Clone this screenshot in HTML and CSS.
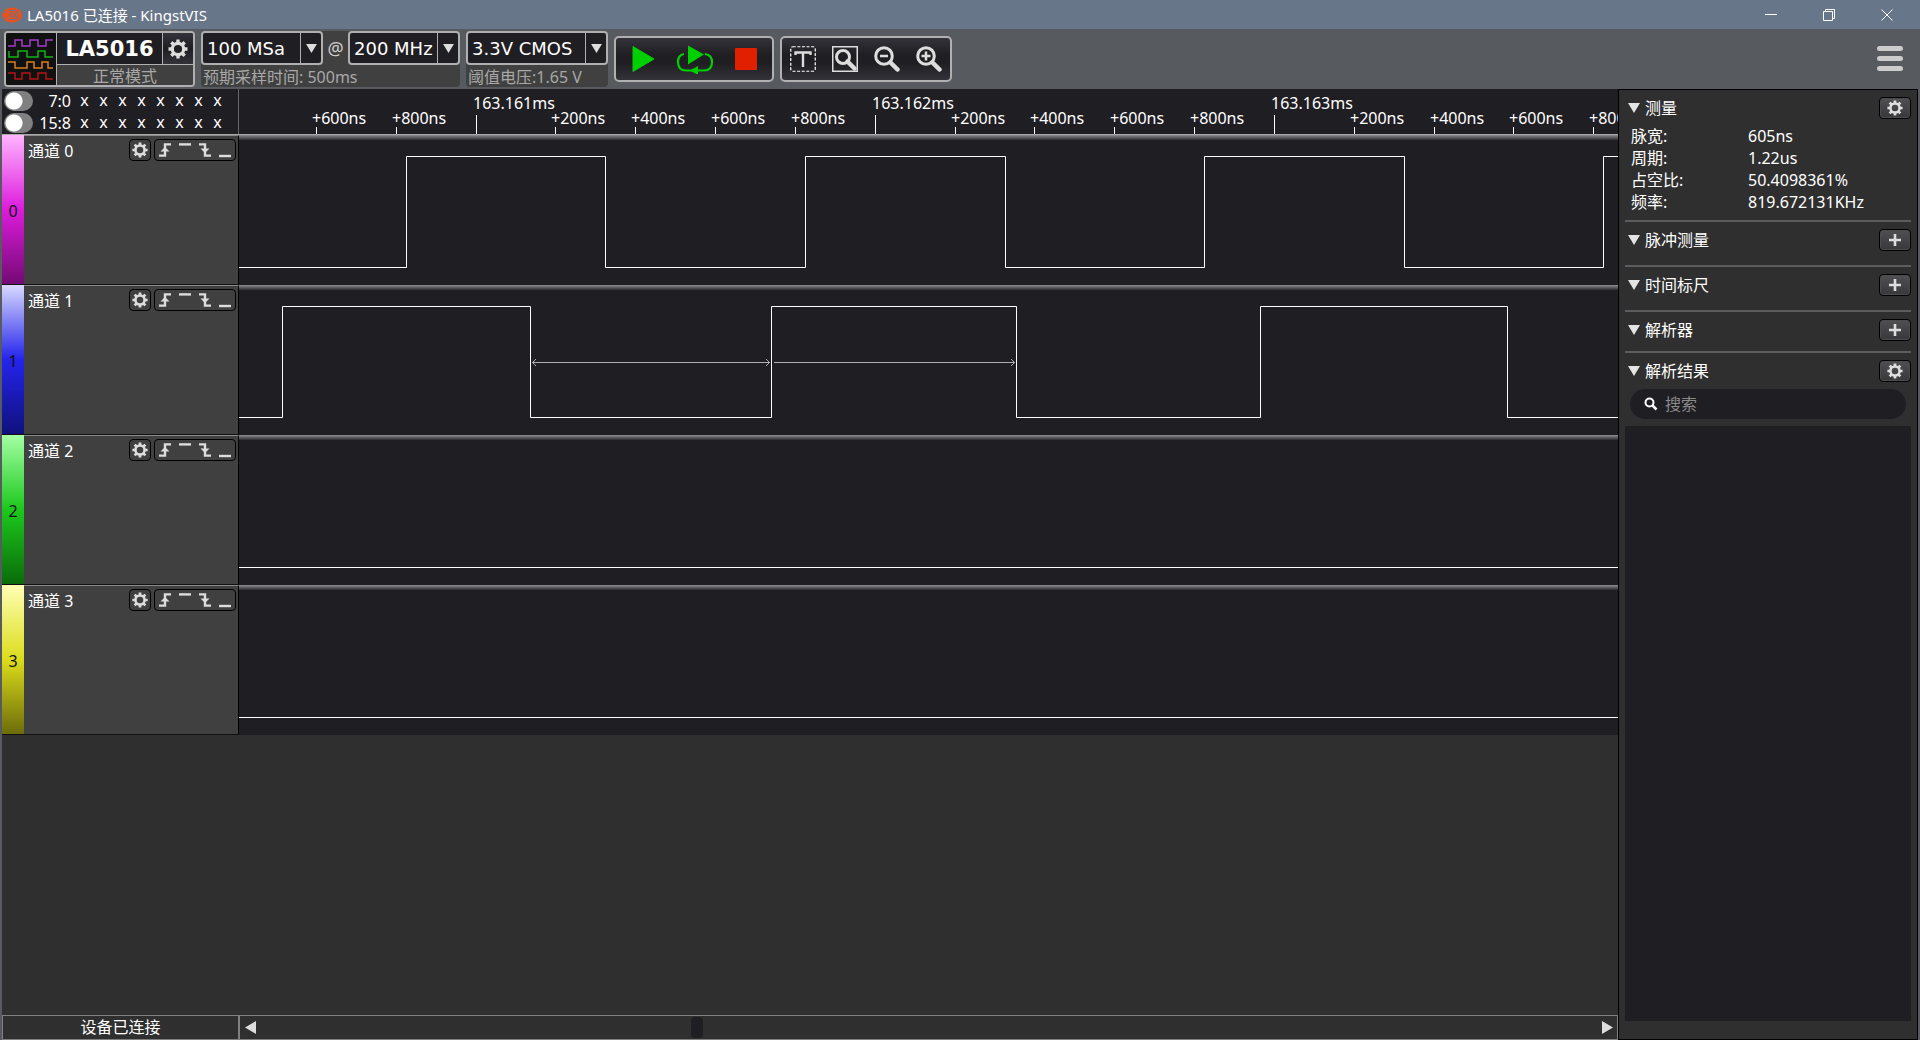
FILE: index.html
```html
<!DOCTYPE html>
<html lang="zh-CN">
<head>
    <meta charset="UTF-8">
    <meta name="viewport" content="width=device-width, initial-scale=1.0">
    <title>LA5016 已连接 - KingstVIS</title>
    <link rel="stylesheet" href="styles.css">
</head>
<body>
    <!-- shared icons -->
    <svg class="sprite" aria-hidden="true">
        <symbol id="gear" viewBox="0 0 20 20">
            <circle cx="10" cy="10" r="5.700" fill="none" stroke="currentColor" stroke-width="3.200"/>
            <path d="M10 .5V5M10 15v4.500M.5 10H5M15 10h4.500M3.300 3.300l3 3M13.700 13.700l3 3M16.700 3.300l-3 3M6.300 13.700l-3 3" stroke="currentColor" stroke-width="3.400"/>
        </symbol>
        <symbol id="plus" viewBox="0 0 20 20">
            <path d="M10 4v12M4 10h12" stroke="currentColor" stroke-width="2.600"/>
        </symbol>
        <symbol id="down" viewBox="0 0 12 10">
            <path d="M0 0h12L6 10z" fill="currentColor"/>
        </symbol>
        <symbol id="rise" viewBox="0 0 20 20">
            <path d="M4 15.600h6V4.400h6" fill="none" stroke="currentColor" stroke-width="2.400"/>
            <path d="M5.500 11.500 10 7l4.500 4.500z" fill="currentColor"/>
        </symbol>
        <symbol id="high" viewBox="0 0 20 20">
            <path d="M4 4.400h12" stroke="currentColor" stroke-width="2.400"/>
        </symbol>
        <symbol id="fall" viewBox="0 0 20 20">
            <path d="M4 4.400h6v11.200h6" fill="none" stroke="currentColor" stroke-width="2.400"/>
            <path d="M5.500 8.500h9L10 13z" fill="currentColor"/>
        </symbol>
        <symbol id="low" viewBox="0 0 20 20">
            <path d="M4 16h12" stroke="currentColor" stroke-width="2.400"/>
        </symbol>
    </svg>

    <header class="titlebar">
        <svg class="app-icon" width="20" height="16" viewBox="0 0 20 16">
            <ellipse cx="10" cy="8" rx="10" ry="7.500" fill="#e8501c"/>
            <path d="M1 5h4M1 11h4M7 3.500h5q4 0 4 4.500t-4 4.500H7M8.500 6v4M8.500 6h2.500q2 0 2 2t-2 2H8.500" fill="none" stroke="#687689" stroke-width="1.200"/>
        </svg>
        <h1 class="title">LA5016 已连接 - KingstVIS</h1>
        <div class="window-buttons">
            <button class="window-button" aria-label="最小化"><svg width="12" height="12"><path d="M0 5.500h12" stroke="#fff"/></svg></button>
            <button class="window-button" aria-label="还原"><svg width="12" height="12"><path d="M.5 2.500h9v9h-9zM2.500 2.500v-2h9v9h-2" fill="none" stroke="#fff"/></svg></button>
            <button class="window-button" aria-label="关闭"><svg width="12" height="12"><path d="M.5.5l11 11M11.500.5l-11 11" stroke="#fff"/></svg></button>
        </div>
    </header>

    <div class="toolbar">
        <div class="device">
            <svg class="device-logo" width="50" height="52" viewBox="0 0 50 52" fill="none" stroke-width="1.500">
                <path d="M2 13h7V7h7v6h8V7h8v6h8V7h7" stroke="#a03ccc"/>
                <path d="M3 18v6h9v-6h9v6h11v-6h7v6h8" stroke="#0cb414"/>
                <path d="M2 29h7v6h12v-6h7v6h8v-6h6v6h5" stroke="#d8801c"/>
                <path d="M2 40h7v6h7v-6h8v6h8v-6h8v6h7" stroke="#b41414"/>
            </svg>
            <div class="device-info">
                <div class="device-top">
                    <span class="device-name">LA5016</span>
                    <button class="device-settings" aria-label="设备设置"><svg width="20" height="20"><use href="#gear"/></svg></button>
                </div>
                <div class="device-mode">正常模式</div>
            </div>
        </div>

        <div class="option-group">
            <div class="option-row">
                <div class="combo combo-depth">
                    <select aria-label="采样深度"><option>100 MSa</option></select>
                    <span class="combo-arrow"><svg width="11" height="9"><use href="#down"/></svg></span>
                </div>
                <span class="at">@</span>
                <div class="combo combo-rate">
                    <select aria-label="采样率"><option>200 MHz</option></select>
                    <span class="combo-arrow"><svg width="11" height="9"><use href="#down"/></svg></span>
                </div>
            </div>
            <div class="option-note">预期采样时间: 500ms</div>
        </div>

        <div class="option-group">
            <div class="option-row">
                <div class="combo combo-level">
                    <select aria-label="阈值电压"><option>3.3V CMOS</option></select>
                    <span class="combo-arrow"><svg width="11" height="9"><use href="#down"/></svg></span>
                </div>
            </div>
            <div class="option-note">阈值电压:1.65 V</div>
        </div>

        <div class="button-group run-group">
            <button class="tool" aria-label="开始"><svg width="38" height="30"><path d="M9 2.500 30 15 9 27.500z" fill="#00d000" stroke="#00d000" stroke-linejoin="round"/></svg></button>
            <button class="tool" aria-label="循环采样">
                <svg width="38" height="30" viewBox="0 0 38 30">
                    <path d="M12 1.500 28 10.500 12 20.500z" fill="#00d000"/>
                    <path d="M8 10q-6 1-6 8 0 8.500 8 8.500h18q8 0 8-8.500 0-7-7-8" fill="none" stroke="#00d000" stroke-width="2.200"/>
                    <path d="M14 26.500 22 22v9z" fill="#00d000"/>
                </svg>
            </button>
            <button class="tool" aria-label="停止"><svg width="38" height="30"><rect x="8" y="4" width="22" height="22" rx="1" fill="#e02000"/></svg></button>
        </div>

        <div class="button-group zoom-group">
            <button class="tool" aria-label="触发位置">
                <svg width="26" height="26" viewBox="0 0 26 26" fill="none" stroke="#ddd">
                    <rect x=".75" y=".75" width="24.500" height="24.500" rx="2" stroke="#fff" stroke-width="1.200" stroke-dasharray="3 1.600"/>
                    <path d="M5.500 9V6.500h15V9M13 6.500V21" stroke-width="2.400"/>
                </svg>
            </button>
            <button class="tool" aria-label="缩放至全屏">
                <svg width="26" height="26" viewBox="0 0 26 26" fill="none" stroke="#ddd">
                    <rect x=".75" y=".75" width="24.500" height="24.500" stroke-width="1.500"/>
                    <circle cx="11" cy="11" r="6.500" stroke-width="3"/>
                    <path d="M15.500 15.500 22.500 22.500" stroke-width="4.500" stroke-linecap="round"/>
                </svg>
            </button>
            <button class="tool" aria-label="缩小">
                <svg width="26" height="26" viewBox="0 0 26 26" fill="none" stroke="#ddd">
                    <circle cx="10" cy="10" r="8.300" stroke-width="3"/>
                    <path d="M6 10h8" stroke-width="2.500"/>
                    <path d="M16.500 16.500 23.500 23.500" stroke-width="4.500" stroke-linecap="round"/>
                </svg>
            </button>
            <button class="tool" aria-label="放大">
                <svg width="26" height="26" viewBox="0 0 26 26" fill="none" stroke="#ddd">
                    <circle cx="10" cy="10" r="8.300" stroke-width="3"/>
                    <path d="M5.500 10h9M10 5.500v9" stroke-width="2.500"/>
                    <path d="M16.500 16.500 23.500 23.500" stroke-width="4.500" stroke-linecap="round"/>
                </svg>
            </button>
        </div>

        <button class="menu" aria-label="菜单">
            <svg width="26" height="26" fill="#ccc"><rect width="26" height="5" y="0" rx="2.500"/><rect width="26" height="5" y="10" rx="2.500"/><rect width="26" height="5" y="20" rx="2.500"/></svg>
        </button>
    </div>

    <div class="workspace">
        <main class="scope">
            <div class="ruler-row">
                <div class="states">
                    <label class="state">
                        <input type="checkbox" class="switch">
                        <span class="state-range">7:0</span>
                        <span class="state-bits"><i>x</i><i>x</i><i>x</i><i>x</i><i>x</i><i>x</i><i>x</i><i>x</i></span>
                    </label>
                    <label class="state">
                        <input type="checkbox" class="switch">
                        <span class="state-range">15:8</span>
                        <span class="state-bits"><i>x</i><i>x</i><i>x</i><i>x</i><i>x</i><i>x</i><i>x</i><i>x</i></span>
                    </label>
                </div>
                <svg class="ruler">
                    <path class="tick" d="M77.500 38v7M157.500 38v7M237.500 26v19M316.500 38v7M396.500 38v7M476.500 38v7M556.500 38v7M636.500 26v19M716.500 38v7M795.500 38v7M875.500 38v7M955.500 38v7M1035.500 26v19M1115.500 38v7M1195.500 38v7M1274.500 38v7M1354.500 38v7"/>
                    <text x="73" y="35">+600ns</text>
                    <text x="153" y="35">+800ns</text>
                    <text x="234" y="20">163.161ms</text>
                    <text x="312" y="35">+200ns</text>
                    <text x="392" y="35">+400ns</text>
                    <text x="472" y="35">+600ns</text>
                    <text x="552" y="35">+800ns</text>
                    <text x="633" y="20">163.162ms</text>
                    <text x="712" y="35">+200ns</text>
                    <text x="791" y="35">+400ns</text>
                    <text x="871" y="35">+600ns</text>
                    <text x="951" y="35">+800ns</text>
                    <text x="1032" y="20">163.163ms</text>
                    <text x="1111" y="35">+200ns</text>
                    <text x="1191" y="35">+400ns</text>
                    <text x="1270" y="35">+600ns</text>
                    <text x="1350" y="35">+800ns</text>
                </svg>
            </div>

            <div class="channel">
                <div class="strip strip-0">0</div>
                <div class="channel-head">
                    <span class="channel-name">通道 0</span>
                    <button class="channel-settings" aria-label="通道 0 设置"><svg width="16" height="16"><use href="#gear"/></svg></button>
                    <div class="triggers">
                        <button aria-label="上升沿"><svg width="20" height="20"><use href="#rise"/></svg></button>
                        <button aria-label="高电平"><svg width="20" height="20"><use href="#high"/></svg></button>
                        <button aria-label="下降沿"><svg width="20" height="20"><use href="#fall"/></svg></button>
                        <button aria-label="低电平"><svg width="20" height="20"><use href="#low"/></svg></button>
                    </div>
                </div>
                <svg class="wave">
                    <path d="M0 132.500H167.500V21.500H366.500V132.500H566.500V21.500H766.500V132.500H965.500V21.500H1165.500V132.500H1364.500V21.500H4000"/>
                </svg>
            </div>

            <div class="channel">
                <div class="strip strip-1">1</div>
                <div class="channel-head">
                    <span class="channel-name">通道 1</span>
                    <button class="channel-settings" aria-label="通道 1 设置"><svg width="16" height="16"><use href="#gear"/></svg></button>
                    <div class="triggers">
                        <button aria-label="上升沿"><svg width="20" height="20"><use href="#rise"/></svg></button>
                        <button aria-label="高电平"><svg width="20" height="20"><use href="#high"/></svg></button>
                        <button aria-label="下降沿"><svg width="20" height="20"><use href="#fall"/></svg></button>
                        <button aria-label="低电平"><svg width="20" height="20"><use href="#low"/></svg></button>
                    </div>
                </div>
                <svg class="wave">
                    <path d="M0 132.500H43.500V21.500H291.500V132.500H532.500V21.500H777.500V132.500H1021.500V21.500H1268.500V132.500H4000"/>
                    <!-- pulse width / period markers -->
                    <path class="measure" d="M293 77.500H531M297 74l-3.500 3.500 3.500 3.500M527 74l3.500 3.500-3.500 3.500M535 77.500H776M772 74l3.500 3.500-3.500 3.500"/>
                </svg>
            </div>

            <div class="channel">
                <div class="strip strip-2">2</div>
                <div class="channel-head">
                    <span class="channel-name">通道 2</span>
                    <button class="channel-settings" aria-label="通道 2 设置"><svg width="16" height="16"><use href="#gear"/></svg></button>
                    <div class="triggers">
                        <button aria-label="上升沿"><svg width="20" height="20"><use href="#rise"/></svg></button>
                        <button aria-label="高电平"><svg width="20" height="20"><use href="#high"/></svg></button>
                        <button aria-label="下降沿"><svg width="20" height="20"><use href="#fall"/></svg></button>
                        <button aria-label="低电平"><svg width="20" height="20"><use href="#low"/></svg></button>
                    </div>
                </div>
                <svg class="wave"><path d="M0 132.500H4000"/></svg>
            </div>

            <div class="channel">
                <div class="strip strip-3">3</div>
                <div class="channel-head">
                    <span class="channel-name">通道 3</span>
                    <button class="channel-settings" aria-label="通道 3 设置"><svg width="16" height="16"><use href="#gear"/></svg></button>
                    <div class="triggers">
                        <button aria-label="上升沿"><svg width="20" height="20"><use href="#rise"/></svg></button>
                        <button aria-label="高电平"><svg width="20" height="20"><use href="#high"/></svg></button>
                        <button aria-label="下降沿"><svg width="20" height="20"><use href="#fall"/></svg></button>
                        <button aria-label="低电平"><svg width="20" height="20"><use href="#low"/></svg></button>
                    </div>
                </div>
                <svg class="wave"><path d="M0 132.500H4000"/></svg>
            </div>

            <footer class="statusbar">
                <div class="status">设备已连接</div>
                <div class="scrollbar">
                    <button aria-label="向左滚动"><svg width="11" height="13"><path d="M11 0v13L0 6.500z" fill="#ddd"/></svg></button>
                    <input type="range" min="0" max="1000" value="325" aria-label="时间位置">
                    <button aria-label="向右滚动"><svg width="11" height="13"><path d="M0 0v13L11 6.500z" fill="#ddd"/></svg></button>
                </div>
            </footer>
        </main>

        <aside class="panel">
            <section class="section">
                <div class="section-head">
                    <button class="section-title"><svg width="12" height="10"><use href="#down"/></svg>测量</button>
                    <button class="section-action" aria-label="测量设置"><svg width="16" height="16"><use href="#gear"/></svg></button>
                </div>
                <dl class="measures">
                    <dt>脉宽:</dt><dd>605ns</dd>
                    <dt>周期:</dt><dd>1.22us</dd>
                    <dt>占空比:</dt><dd>50.4098361%</dd>
                    <dt>频率:</dt><dd>819.672131KHz</dd>
                </dl>
            </section>
            <section class="section section-empty">
                <div class="section-head">
                    <button class="section-title"><svg width="12" height="10"><use href="#down"/></svg>脉冲测量</button>
                    <button class="section-action" aria-label="添加脉冲测量"><svg width="20" height="20"><use href="#plus"/></svg></button>
                </div>
            </section>
            <section class="section section-empty">
                <div class="section-head">
                    <button class="section-title"><svg width="12" height="10"><use href="#down"/></svg>时间标尺</button>
                    <button class="section-action" aria-label="添加时间标尺"><svg width="20" height="20"><use href="#plus"/></svg></button>
                </div>
            </section>
            <section class="section section-decoder">
                <div class="section-head">
                    <button class="section-title"><svg width="12" height="10"><use href="#down"/></svg>解析器</button>
                    <button class="section-action" aria-label="添加解析器"><svg width="20" height="20"><use href="#plus"/></svg></button>
                </div>
            </section>
            <section class="section section-results">
                <div class="section-head">
                    <button class="section-title"><svg width="12" height="10"><use href="#down"/></svg>解析结果</button>
                    <button class="section-action" aria-label="解析结果设置"><svg width="16" height="16"><use href="#gear"/></svg></button>
                </div>
                <label class="search">
                    <svg width="14" height="14" fill="none" stroke="#fff"><circle cx="5.500" cy="5.500" r="4" stroke-width="2"/><path d="M8.500 8.500l4 4" stroke-width="2.500"/></svg>
                    <input type="text" placeholder="搜索" aria-label="搜索">
                </label>
                <div class="results"></div>
            </section>
        </aside>
    </div>
</body>
</html>
```

FILE: styles.css
```css
* {
    box-sizing: border-box;
}

body {
    margin: 0;
    height: 100vh;
    display: flex;
    flex-direction: column;
    background: #575a5e;
    color: #fff;
    font-family: "Noto Sans", "Noto Sans CJK SC", sans-serif;
    font-size: 16px;
    line-height: 22px;
    overflow: hidden;
}

button {
    display: flex;
    align-items: center;
    justify-content: center;
    margin: 0;
    padding: 0;
    border: none;
    background: none;
    color: #ddd;
    font: inherit;
}

svg {
    display: block;
    flex: none;
}

.sprite {
    position: absolute;
    width: 0;
    height: 0;
}

/* title bar */
.titlebar {
    display: flex;
    align-items: center;
    height: 29px;
    flex: none;
    padding-left: 2px;
    background: #687689;
}

.title {
    margin: 0 0 0 5px;
    font-size: 15px;
    font-weight: 400;
}

.window-buttons {
    display: flex;
    margin-left: auto;
    padding-right: 4px;
}

.window-button {
    width: 58px;
    height: 28px;
}

/* toolbar */
.toolbar {
    display: flex;
    align-items: center;
    gap: 6px;
    height: 60px;
    flex: none;
    padding: 0 17px 0 4px;
    background: #575a5e;
}

.device {
    display: flex;
    width: 191px;
    height: 56px;
    border: 2px solid #b0b0b0;
    border-radius: 4px;
    background: #1f1e22;
    overflow: hidden;
}

.device-logo {
    background: #111;
}

.device-info {
    flex: 1;
    display: flex;
    flex-direction: column;
    border-left: 1px solid #b0b0b0;
}

.device-top {
    display: flex;
    height: 32px;
    border-bottom: 1px solid #b0b0b0;
}

.device-name {
    flex: 1;
    text-align: center;
    font-family: "DejaVu Sans", sans-serif;
    font-size: 21px;
    font-weight: 700;
    line-height: 32px;
}

.device-settings {
    width: 31px;
    border-left: 1px solid #b0b0b0;
    background: linear-gradient(#34333a, #1f1e22 50%, #34333a);
}

.device-mode {
    flex: 1;
    line-height: 22px;
    text-align: center;
    color: #a8a8a8;
    background: #404040;
}

.option-group {
    height: 56px;
    border-radius: 4px;
    background: #404040;
}

.option-row {
    display: flex;
    align-items: center;
}

.combo {
    position: relative;
    height: 34px;
    border: 2px solid #b0b0b0;
    border-radius: 4px;
    background: #1f1e22;
}

.combo-depth {
    width: 122px;
}

.combo-rate {
    width: 112px;
}

.combo-level {
    width: 142px;
}

.combo select {
    appearance: none;
    width: 100%;
    height: 30px;
    padding: 1px 0 0 4px;
    border: none;
    background: none;
    color: #fff;
    font-family: "DejaVu Sans", sans-serif;
    font-size: 18px;
}

.combo-arrow {
    position: absolute;
    top: 0;
    right: 0;
    display: flex;
    align-items: center;
    justify-content: center;
    width: 21px;
    height: 30px;
    border-left: 1px solid #b0b0b0;
    color: #ddd;
    pointer-events: none;
}

.at {
    width: 25px;
    text-align: center;
    font-size: 18px;
    color: #ccc;
}

.option-note {
    padding: 1px 0 0 2px;
    color: #a8a8a8;
    white-space: nowrap;
}

.button-group {
    display: flex;
    align-items: center;
    height: 46px;
    border: 2px solid #b0b0b0;
    border-radius: 5px;
    background: linear-gradient(#34333a, #1f1e22 40%, #1f1e22 60%, #34333a);
}

.run-group {
    width: 160px;
    justify-content: space-between;
    padding: 0 7px 0 8px;
}

.zoom-group {
    width: 172px;
    justify-content: space-between;
    padding: 0 8px;
}

.menu {
    margin-left: auto;
}

/* scope area */
.workspace {
    flex: 1;
    min-height: 0;
    display: flex;
    padding: 0 2px;
}

.scope {
    flex: 1;
    min-width: 0;
    display: flex;
    flex-direction: column;
    background: #2f2f2f;
}

.ruler-row {
    display: flex;
    height: 46px;
    flex: none;
    border-bottom: 1px solid #a8a8a8;
    background: #1f1e22;
}

.states {
    width: 237px;
    flex: none;
    padding: 1px 2px;
    border-right: 1px solid #666;
}

.state {
    display: flex;
    align-items: center;
    height: 22px;
}

.switch {
    appearance: none;
    width: 29px;
    height: 20px;
    margin: 0;
    flex: none;
    border-radius: 10px;
    background: radial-gradient(circle at 10px 10px, #fff 8px, #808080 9px);
}

.state-range {
    width: 38px;
    text-align: right;
}

.state-bits {
    display: grid;
    grid-template-columns: repeat(8, 19px);
    margin-left: 4px;
    line-height: 20px;
    padding-bottom: 2px;
    text-align: center;
}

.state-bits i {
    font-style: normal;
}

.ruler {
    flex: 1;
    min-width: 0;
    height: 45px;
}

.ruler text {
    fill: #fff;
    font-size: 16px;
}

.tick {
    stroke: #fff;
}

.channel {
    display: flex;
    height: 150px;
    flex: none;
    background: #1f1e22;
}

.strip {
    width: 22px;
    flex: none;
    line-height: 152px;
    text-align: center;
    color: #111;
    border-bottom: 1px solid #111;
}

.strip-0 {
    background: linear-gradient(#ffb4ff, #dc1cdc 50%, #740a74);
}

.strip-1 {
    background: linear-gradient(#d8d8ff, #2424ec 50%, #10107c);
}

.strip-2 {
    background: linear-gradient(#a4ffa4, #1cc81c 50%, #0a6c0a);
}

.strip-3 {
    background: linear-gradient(#ffffb4, #dcdc1c 50%, #6c6c0a);
}

.channel-head {
    display: flex;
    align-items: flex-start;
    width: 215px;
    flex: none;
    padding: 3px 2px 0 4px;
    border-top: 1px solid #8a8a8a;
    border-right: 1px solid #000;
    border-bottom: 1px solid #111;
    background: #404040;
}

.channel-name {
    flex: 1;
    line-height: 24px;
}

.channel-settings {
    width: 22px;
    height: 22px;
    border: 1px solid #000;
    border-radius: 4px;
}

.triggers {
    display: flex;
    margin-left: 3px;
    height: 22px;
    border: 1px solid #000;
    border-radius: 4px;
}

.wave {
    flex: 1;
    min-width: 0;
    height: 150px;
    fill: none;
    stroke: #fff;
    background: linear-gradient(#8e8e92, #2c2b30 5px, #1f1e22 5px);
}

.wave .measure {
    stroke: #b0b0b0;
}

/* status bar */
.statusbar {
    display: flex;
    height: 25px;
    margin-top: auto;
}

.status {
    width: 237px;
    flex: none;
    border: 1px solid #808080;
    text-align: center;
}

.scrollbar {
    flex: 1;
    display: flex;
    align-items: center;
    border: 1px solid #808080;
}

.scrollbar button {
    width: 20px;
    height: 23px;
}

.scrollbar input {
    appearance: none;
    flex: 1;
    min-width: 0;
    height: 21px;
    margin: 0;
    background: none;
}

.scrollbar input::-webkit-slider-thumb {
    appearance: none;
    width: 12px;
    height: 21px;
    border-radius: 4px;
    background: #1f1e22;
}

/* side panel */
.panel {
    display: flex;
    flex-direction: column;
    width: 300px;
    flex: none;
    border: 1px solid #000;
    background: #2f2f2f;
}

.section {
    margin: 0 6px;
    padding: 7px 0;
    border-bottom: 2px solid #5c5c5e;
}

.section-empty {
    padding-bottom: 14px;
}

.section-decoder {
    padding-bottom: 10px;
}

.section-results {
    flex: 1;
    display: flex;
    flex-direction: column;
    padding-bottom: 18px;
    border-bottom: none;
}

.section-head {
    display: flex;
    justify-content: space-between;
}

.section-title {
    gap: 5px;
    padding-left: 3px;
    color: #fff;
}

.section-title svg {
    color: #e4e4e4;
}

.section-action {
    width: 32px;
    height: 22px;
    border: 1px solid #000;
    border-radius: 4px;
    background: linear-gradient(#505052, #38383a);
    box-shadow: inset 0 0 0 1px #4c4c4e;
}

.measures {
    display: grid;
    grid-template-columns: 117px 1fr;
    margin: 6px 0 0 6px;
}

.measures dd {
    margin: 0;
}

.search {
    display: flex;
    align-items: center;
    gap: 7px;
    height: 30px;
    margin: 7px 5px;
    padding: 0 14px;
    border-radius: 15px;
    background: #1f1e22;
}

.search input {
    flex: 1;
    min-width: 0;
    padding: 0;
    border: none;
    outline: none;
    background: none;
    color: #fff;
    font: inherit;
}

.search input::placeholder {
    color: #8a8a8a;
}

.results {
    flex: 1;
    background: #1f1e22;
}
```
